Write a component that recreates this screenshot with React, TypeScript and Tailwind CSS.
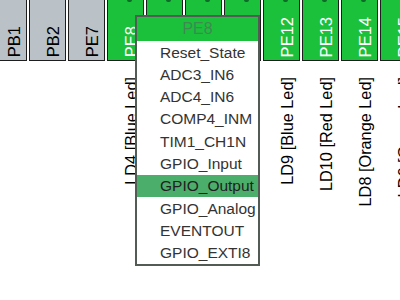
import React from 'react';

type Pin = { name: string; on: boolean; label?: string };

const pins: Pin[] = [
  { name: 'PB1', on: false },
  { name: 'PB2', on: false },
  { name: 'PE7', on: false },
  { name: 'PE8', on: true, label: 'LD4 [Blue Led]' },
  { name: 'PE9', on: true, label: 'LD3 [Red Led]' },
  { name: 'PE10', on: true, label: 'LD5 [Orange Led]' },
  { name: 'PE11', on: true, label: 'LD7 [Green Led]' },
  { name: 'PE12', on: true, label: 'LD9 [Blue Led]' },
  { name: 'PE13', on: true, label: 'LD10 [Red Led]' },
  { name: 'PE14', on: true, label: 'LD8 [Orange Led]' },
  { name: 'PE15', on: true, label: 'LD6 [Green Led]' },
];

const modes = [
  'Reset_State',
  'ADC3_IN6',
  'ADC4_IN6',
  'COMP4_INM',
  'TIM1_CH1N',
  'GPIO_Input',
  'GPIO_Output',
  'GPIO_Analog',
  'EVENTOUT',
  'GPIO_EXTI8',
];

const App: React.FC = () => {
  const selected = 'GPIO_Output';

  return (
    <div className="relative w-[400px] h-[300px] overflow-hidden bg-white font-['Liberation_Sans',Arial,sans-serif]">
      {/* Pin row with signal labels */}
      <div className="flex gap-[2px] -ml-[10px]">
        {pins.map((pin) => (
          <div key={pin.name} className="flex flex-col w-[37px] shrink-0">
            <div
              className={`relative h-[61px] flex items-end justify-center pl-[11px] pb-[3px] border-x-[1.5px] border-b-[1.5px] border-[#1e1e1e] ${
                pin.on ? 'bg-[#1cc13b] text-white' : 'bg-[#bbc2c7] text-black'
              }`}
            >
              {pin.on && (
                <div className="absolute top-0 left-[19px] w-[5px] h-[2px] rounded-b-full bg-[#0e6a27]" />
              )}
              <span className="[writing-mode:vertical-rl] rotate-180 text-[16.5px] whitespace-nowrap">
                {pin.name}
              </span>
            </div>
            <div className="flex justify-center pl-[11px] pt-[16px]">
              {pin.label && (
                <span className="[writing-mode:vertical-rl] rotate-180 text-[16.3px] text-black whitespace-nowrap">
                  {pin.label}
                </span>
              )}
            </div>
          </div>
        ))}
      </div>

      {/* Pin mode popup */}
      <div className="absolute left-[135px] top-[15px] w-[125px] h-[251px] flex flex-col border-2 border-[#525c55] bg-white">
        <div className="h-[24px] flex items-center justify-center bg-[#1cc13b] text-[16px] text-[#3f8a50]">
          PE8
        </div>
        {modes.map((m) => (
          <div
            key={m}
            className={`h-[22.3px] flex items-center pl-[23px] text-[15.5px] whitespace-nowrap ${
              m === selected ? 'bg-[#4cae6b] text-[#1f1f1f]' : 'text-[#333333]'
            }`}
          >
            {m}
          </div>
        ))}
      </div>
    </div>
  );
};

export default App;
